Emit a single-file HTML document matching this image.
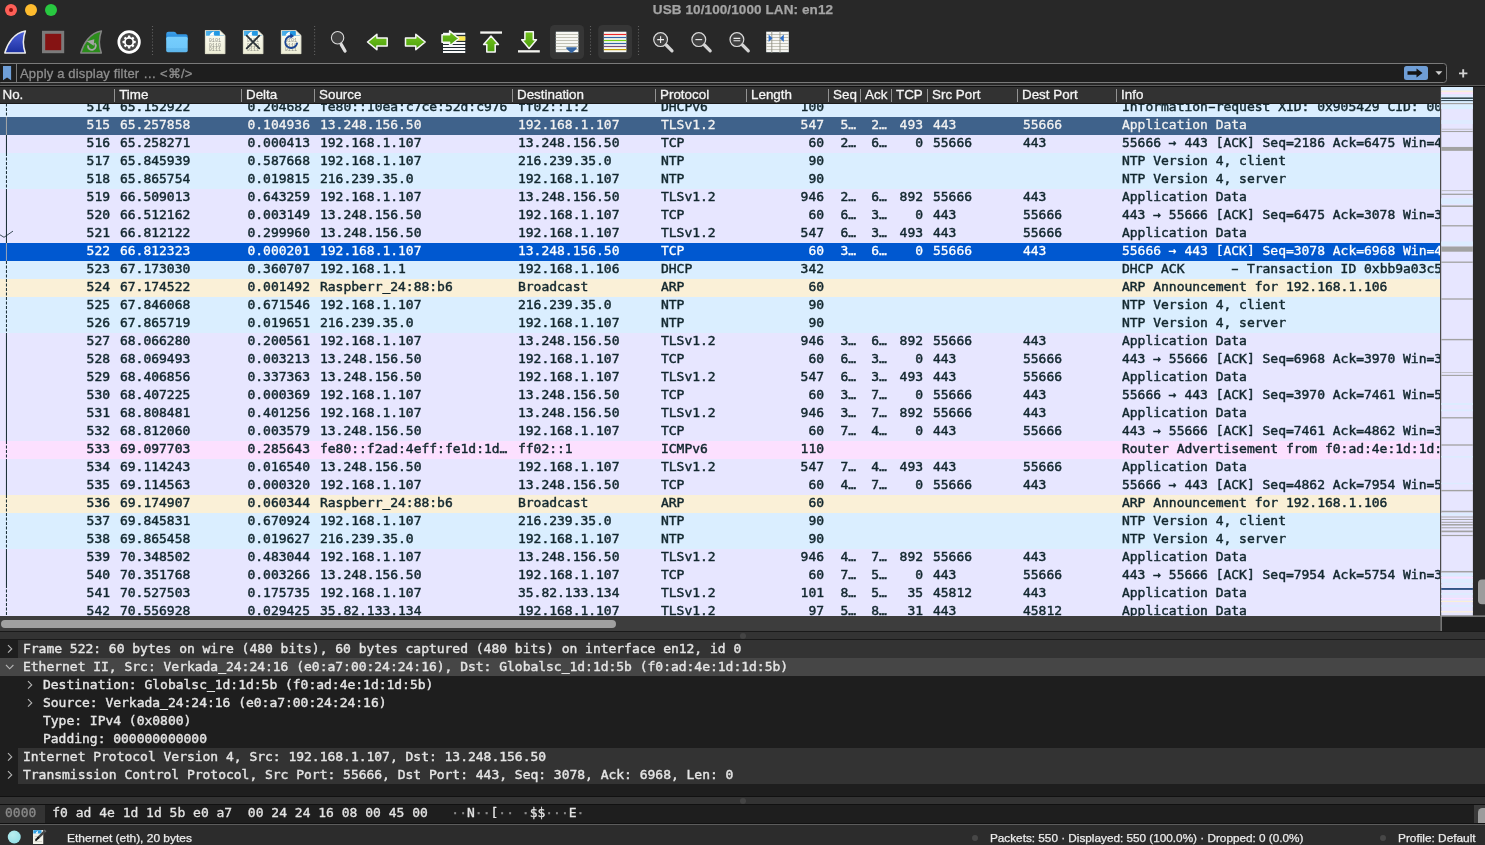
<!DOCTYPE html>
<html lang="en"><head><meta charset="utf-8"><title>USB 10/100/1000 LAN: en12</title>
<style>
html,body{margin:0;padding:0;}
body{will-change:transform;width:1485px;height:845px;overflow:hidden;background:#282828;position:relative;font-family:"Liberation Sans",sans-serif;-webkit-font-smoothing:antialiased;}
.abs{position:absolute;}
#title{left:0;top:0;width:1485px;height:20px;text-align:center;color:#a4a4a4;font-weight:bold;font-size:13.5px;letter-spacing:0.1px;line-height:19px;-webkit-text-stroke:0.25px currentColor;text-indent:1px;}
.tl{position:absolute;top:4px;width:12px;height:12px;border-radius:50%;}
#filter{left:-3px;top:63px;width:1448px;height:18px;border:1px solid #7a7a7a;border-radius:3.5px;background:#1e1e1e;box-sizing:content-box;}
#ftext{left:20px;top:63.5px;font-size:13px;line-height:19px;color:#8e8e8e;white-space:pre;-webkit-text-stroke:0.3px currentColor;letter-spacing:0.17px;}
#hdr{left:0;top:87px;width:1440px;height:16px;background:#323232;color:#f4f4f4;-webkit-text-stroke:0.3px currentColor;font-size:13.4px;line-height:15px;}
#hdr span{position:absolute;top:0;white-space:pre;}
#hdr i{position:absolute;top:2px;width:1.2px;height:13px;background:#929292;}
#list{left:0;top:104px;width:1440px;height:512px;overflow:hidden;background:#e7e6ff;font-family:"DejaVu Sans Mono","Liberation Mono",monospace;font-size:13px;}
.r{position:absolute;left:0;width:1440px;height:18px;color:#12272e;-webkit-text-stroke:0.45px currentColor;letter-spacing:-0.02px;}
.r span{position:absolute;top:0;height:18px;line-height:16px;white-space:pre;overflow:hidden;}
.r i{display:inline-block;font-style:normal;transform:scaleX(1.7);}
.udp{background:#daeeff}.tcp{background:#e7e6ff}.arp{background:#faf0d7}.icmp6{background:#fce0ff}
.sel{background:#0058d0;color:#fff;-webkit-text-stroke-width:0.3px}.sel2{background:#3f628b;color:#f2f2f2;-webkit-text-stroke-width:0.3px}
#det{left:0;top:640px;width:1485px;height:156px;background:#1e1e1e;font-family:"DejaVu Sans Mono","Liberation Mono",monospace;font-size:13px;color:#e4e4e4;overflow:hidden;}
.d{position:absolute;left:0;width:1485px;height:18px;line-height:18px;white-space:pre;-webkit-text-stroke:0.4px currentColor;letter-spacing:-0.02px;}
.d b{position:absolute;top:0;height:18px;font-weight:normal;}
.top b.bg{left:18px;width:1467px;background:#333333;}
.dsel{background:#464646;}
#bytes{left:0;top:805px;width:1485px;height:19px;background:#1e1e1e;font-family:"DejaVu Sans Mono","Liberation Mono",monospace;font-size:13px;color:#e4e4e4;line-height:15px;white-space:pre;-webkit-text-stroke:0.3px currentColor;}
#bytes u{text-decoration:none;color:#8c8c8c;}
#status{left:0;top:825px;width:1485px;height:20px;background:#2c2c2c;color:#ececec;font-size:11px;line-height:26.7px;white-space:pre;-webkit-text-stroke:0.25px currentColor;}
#status span{transform-origin:0 50%;}
</style></head><body>

<div id="title" class="abs">USB 10/100/1000 LAN: en12</div>
<div class="tl" style="left:5px;background:#fe5f57"></div><div class="abs" style="left:9.1px;top:8.1px;width:3.8px;height:3.8px;border-radius:50%;background:#8a0f0a"></div>
<div class="tl" style="left:25px;background:#febc2e"></div><div class="tl" style="left:45px;background:#28c840"></div>
<svg class="abs" style="left:0;top:20px" width="1485" height="43" viewBox="0 20 1485 43">
<defs>
<linearGradient id="gb" x1="0" y1="0" x2="0" y2="1"><stop offset="0" stop-color="#4f63dc"/><stop offset="1" stop-color="#1b2f9e"/></linearGradient>
<linearGradient id="gg" x1="0" y1="0" x2="0" y2="1"><stop offset="0" stop-color="#74c31e"/><stop offset="1" stop-color="#4a9e0c"/></linearGradient>
<linearGradient id="gf" x1="0" y1="0" x2="0" y2="1"><stop offset="0" stop-color="#76cdfc"/><stop offset="0.72" stop-color="#70c8fa"/><stop offset="0.75" stop-color="#62bbf0"/><stop offset="1" stop-color="#5eb6ec"/></linearGradient>
<linearGradient id="gt" x1="0" y1="0" x2="0" y2="1"><stop offset="0" stop-color="#3fa0e8"/><stop offset="1" stop-color="#1c84d8"/></linearGradient>
<linearGradient id="gp" x1="0" y1="0" x2="1" y2="0"><stop offset="0" stop-color="#54b4ea"/><stop offset="0.5" stop-color="#249ae4"/><stop offset="1" stop-color="#1890e0"/></linearGradient>
<linearGradient id="gpage" x1="0" y1="0" x2="0" y2="1"><stop offset="0" stop-color="#fdfdf4"/><stop offset="1" stop-color="#eeeed6"/></linearGradient>
<g id="fin"><path d="M4.8 53C7.2 44 14 32.5 25.4 30.9C22.7 38 22.9 46 25.3 53z"/></g>
<g id="page">
<path d="M0 0h14.8l5.4 5.2v18.6H0z" fill="url(#gpage)"/>
<path d="M0.9 0.8h13.6l4.8 4.7H0.9z" fill="url(#gp)"/>
<path d="M4.4 5.6C5.2 3.3 6.8 1.7 9.4 1.2C8.5 2.6 8.5 4.2 9.6 5.6z" fill="#fff"/>
<path d="M14.8 0v5.2h5.4z" fill="#f4f4e6"/>
<path d="M0.3 0.3h14.4l5.2 5v18.2H0.3z" fill="none" stroke="#cfcfbd" stroke-width="0.7"/>
</g>
<g id="digits" font-family="'Liberation Mono',monospace" font-size="5.2" fill="#77776f" opacity="0.8"><text x="3.7" y="12">0101</text><text x="3.7" y="16.5">0110</text><text x="3.7" y="21">0111</text></g>
<g id="lens"><circle cx="0" cy="0" r="6.9" fill="#404040" stroke="#dadada" stroke-width="1.2"/><path d="M5.6 5.4L11.4 11.2" stroke="#d4d4d4" stroke-width="3.2" stroke-linecap="round"/></g>
<g id="arr"><path d="M0 0L9.4 -7.7V-4H19.7V4H9.4V7.7z"/></g>
<g id="lines"><rect x="-0.3" y="-0.3" width="23.2" height="21.1" fill="#27323a"/><rect x="0" y="0" width="22.6" height="20.5" fill="#f7f7f3"/></g>
</defs>
<!-- 1 shark fin start -->
<use href="#fin" fill="url(#gb)" stroke="#ececec" stroke-width="1.5" stroke-linejoin="round"/>
<!-- 2 stop -->
<rect x="42" y="30.8" width="22.2" height="22.4" fill="#7b7b7b"/><rect x="45.2" y="33.8" width="16" height="16.4" fill="#851313"/>
<!-- 3 restart -->
<use href="#fin" x="76" fill="#2b8c1b" stroke="#858585" stroke-width="1.5" stroke-linejoin="round"/>
<path d="M88 45.4A3.9 3.9 0 1 0 94.6 43.2" fill="none" stroke="#a6a6a6" stroke-width="1.8"/><path d="M86.8 41.3l7.5-2-0.6 6.4z" fill="#a6a6a6"/>
<!-- 4 options gear -->
<circle cx="129.1" cy="42" r="10.3" fill="#484848" stroke="#fff" stroke-width="2.7"/>
<g fill="#fff"><circle cx="129.1" cy="42" r="5"/>
<rect x="127.9" y="35.5" width="2.4" height="13" rx="0.5"/><rect x="127.9" y="35.5" width="2.4" height="13" rx="0.5" transform="rotate(45 129.1 42)"/><rect x="127.9" y="35.5" width="2.4" height="13" rx="0.5" transform="rotate(90 129.1 42)"/><rect x="127.9" y="35.5" width="2.4" height="13" rx="0.5" transform="rotate(135 129.1 42)"/></g>
<circle cx="129.1" cy="42" r="3.3" fill="#363636"/>
<!-- separators -->
<g stroke="#606060" stroke-width="1.1" stroke-dasharray="1.1 2"><path d="M152.5 26v31M314.6 26v31M590.5 26v31M638.5 26v31"/></g>
<!-- 5 folder -->
<path d="M166.2 34q0-2.3 2.3-2.3h5.4q1.1 0 1.8 0.9l1.3 1.6h8.7q2 0 2 2v4h-21.5z" fill="url(#gt)"/>
<rect x="166.2" y="36.8" width="21.5" height="15.4" rx="1.6" fill="url(#gf)"/>
<!-- 6 file open -->
<use href="#page" x="205" y="30.2"/><use href="#digits" x="205" y="30.2"/>
<!-- 7 close -->
<use href="#page" x="243" y="30.2"/><use href="#digits" x="243" y="30.2"/>
<path d="M246.7 35.7l12.6 12.6M259.3 35.7l-12.6 12.6" stroke="#2a3238" stroke-width="1.8" stroke-linecap="round"/>
<!-- 8 reload -->
<use href="#page" x="281" y="30.2"/><use href="#digits" x="281" y="30.2"/>
<path d="M297.2 42.6a6 6 0 1 1 -6.2 -6.6" fill="none" stroke="#1a4595" stroke-width="1.8"/><path d="M290.3 33.3l3.8 2.7-3.8 2.7z" fill="#1a4595"/>
<!-- 9 find -->
<circle cx="337.6" cy="37.75" r="6.2" fill="#404040" stroke="#dcdcdc" stroke-width="1.1"/><path d="M341.3 44.6L345 51" stroke="#dedede" stroke-width="3.3" stroke-linecap="round"/>
<!-- 10 back / 11 fwd -->
<use href="#arr" x="367.5" y="42" fill="url(#gg)" stroke="#f6f6f6" stroke-width="1.5" stroke-linejoin="round"/>
<use href="#arr" transform="translate(425.2 42) scale(-1 1)" fill="url(#gg)" stroke="#f6f6f6" stroke-width="1.5" stroke-linejoin="round"/>
<!-- 12 goto -->
<rect x="442.7" y="32.5" width="22.8" height="20.8" fill="#222d33"/>
<g fill="#f8f8f8"><rect x="443" y="32.8" width="22.25" height="2"/><rect x="443" y="36.4" width="22.25" height="4.2"/><rect x="443" y="42" width="22.25" height="2"/><rect x="443" y="45" width="22.25" height="2"/><rect x="443" y="48" width="22.25" height="2"/><rect x="443" y="51" width="22.25" height="2"/></g>
<rect x="457" y="36.4" width="8.25" height="4.2" fill="#fce94f"/>
<path d="M0 0L9.2 -7.6V-3.8H16.8V3.8H9.2V7.6z" transform="translate(458.8 38.5) scale(-1 1)" fill="url(#gg)" stroke="#f6f6f6" stroke-width="1.5" stroke-linejoin="round"/>
<!-- 13 first -->
<rect x="480.25" y="31.4" width="21.75" height="2.3" fill="#f4f4f0"/>
<path d="M491 36l7.4 8.6h-3.2v7.4h-8.4v-7.4h-3.2z" fill="url(#gg)" stroke="#f6f6f6" stroke-width="1.5" stroke-linejoin="round"/>
<!-- 14 last -->
<rect x="518" y="50.2" width="21.8" height="2.3" fill="#f4f4f0"/>
<path d="M529.1 48.5l7.4-8.8h-3.2v-7.9h-8.4v7.9h-3.2z" fill="url(#gg)" stroke="#f6f6f6" stroke-width="1.5" stroke-linejoin="round"/>
<!-- 15 autoscroll -->
<rect x="550" y="25" width="34" height="34" rx="4.5" fill="#363636"/>
<use href="#lines" x="555.8" y="31.7"/>
<g stroke="#babaae" stroke-width="0.9"><path d="M555.8 34.5h22.6M555.8 37.5h22.6M555.8 40.5h22.6M555.8 43.5h22.6M555.8 46.5h22.6M555.8 49.6h22.6"/></g>
<path d="M566.6 47.3h9.8q1 0.6 0 1.6l-4 3.7q-0.9 0.7-1.8 0l-4-3.7q-1-1 0-1.6z" fill="#3465a4"/>
<!-- 16 colorize -->
<rect x="598.2" y="25" width="33.8" height="34" rx="4.5" fill="#363636"/>
<use href="#lines" x="603.8" y="31.7"/>
<g stroke-width="1.2"><path d="M603.8 34.5h22.6" stroke="#ef2929"/><path d="M603.8 37.5h22.6" stroke="#3465a4"/><path d="M603.8 40.5h22.6" stroke="#73d216"/><path d="M603.8 43.5h22.6" stroke="#3465a4"/><path d="M603.8 46.5h22.6" stroke="#75507b"/><path d="M603.8 49.6h22.6" stroke="#c4a000"/></g>
<!-- 17-19 zoom -->
<use href="#lens" x="660.6" y="39.6"/><path d="M657.2 39.6h6.8M660.6 36.2v6.8" stroke="#ececec" stroke-width="1.1"/>
<use href="#lens" x="698.8" y="39.6"/><path d="M695.4 39.6h6.8" stroke="#ececec" stroke-width="1.1"/>
<use href="#lens" x="736.9" y="39.6"/><path d="M733.5 38.4h6.8M733.5 40.8h6.8" stroke="#ececec" stroke-width="1.1"/>
<!-- 20 resize columns -->
<use href="#lines" x="766.2" y="31.7"/>
<g stroke="#babaae" stroke-width="0.9"><path d="M766.2 34.5h22.6M766.2 37.5h22.6M766.2 40.5h22.6M766.2 43.5h22.6M766.2 46.5h22.6M766.2 49.6h22.6"/></g>
<path d="M771.8 31v22M780 31v22" stroke="#8e8e84" stroke-width="0.9"/>
<path d="M768.6 34.4l3.9 3.75-3.9 3.75z" fill="#2f6fc8"/><path d="M783.8 34.4l-3.9 3.75 3.9 3.75z" fill="#2f6fc8"/>
</svg>

<div id="filter" class="abs"></div><div class="abs" style="left:16px;top:64px;width:1.2px;height:18px;background:#7a7a7a"></div>
<svg class="abs" style="left:0;top:63px" width="20" height="21" viewBox="0 63 20 21"><path d="M3 66h8.1v14.2l-4.05-2.8-4.05 2.8z" fill="#6f9fd8"/></svg>
<div id="ftext" class="abs">Apply a display filter … &lt;⌘/&gt;</div>
<div class="abs" style="left:1403.6px;top:66px;width:24.2px;height:14px;border-radius:2.5px;background:#6f9ed6"></div>
<svg class="abs" style="left:1400px;top:63px" width="85" height="21" viewBox="1400 63 85 21"><path d="M1407.5 71.2h9v-2.6l6 4.4-6 4.4v-2.6h-9z" fill="#141414"/><path d="M1435.4 71.2h7l-3.5 3.8z" fill="#d0d0d0"/><path d="M1463.2 69.2v8.4M1459 73.4h8.4" stroke="#d2d2d2" stroke-width="1.9"/></svg>
<div class="abs" style="left:0;top:84.75px;width:1485px;height:1.5px;background:#5e5e5e"></div>
<div class="abs" style="left:0;top:86.25px;width:1485px;height:0.75px;background:#111"></div>
<div id="hdr" class="abs">
<span style="left:2.5px">No.</span>
<i style="left:114.2px"></i>
<span style="left:119.2px">Time</span>
<i style="left:241.2px"></i>
<span style="left:246.0px">Delta</span>
<i style="left:313.8px"></i>
<span style="left:319.0px">Source</span>
<i style="left:511.8px"></i>
<span style="left:517.0px">Destination</span>
<i style="left:654.8px"></i>
<span style="left:660.0px">Protocol</span>
<i style="left:746.3px"></i>
<span style="left:751.0px">Length</span>
<i style="left:827.8px"></i>
<span style="left:833.0px">Seq</span>
<i style="left:859.8px"></i>
<span style="left:865.0px">Ack</span>
<i style="left:890.8px"></i>
<span style="left:896.0px">TCP</span>
<i style="left:926.8px"></i>
<span style="left:932.0px">Src Port</span>
<i style="left:1016.8px"></i>
<span style="left:1022.0px">Dest Port</span>
<i style="left:1115.8px"></i>
<span style="left:1121.0px">Info</span>
</div>
<div class="abs" style="left:0;top:103px;width:1440px;height:1px;background:#1c1c1c"></div>
<div id="list" class="abs">
<div class="r udp" style="top:-5px">
<span style="left:0px;width:110px;text-align:right">514</span>
<span style="left:120.0px;width:121.0px">65.152922</span>
<span style="left:247.5px;width:66.5px">0.204682</span>
<span style="left:320.0px;width:192.0px">fe80::10ea:c7ce:52d:c976</span>
<span style="left:518.0px;width:137.0px">ff02::1:2</span>
<span style="left:661.0px;width:86.0px">DHCPv6</span>
<span style="left:747px;width:77px;text-align:right">100</span>
<span style="left:1122.0px;width:318.0px">Information<i>-</i>request XID: 0x905429 CID: 000100012c1e</span>
</div>
<div class="r sel2" style="top:13px">
<span style="left:0px;width:110px;text-align:right">515</span>
<span style="left:120.0px;width:121.0px">65.257858</span>
<span style="left:247.5px;width:66.5px">0.104936</span>
<span style="left:320.0px;width:192.0px">13.248.156.50</span>
<span style="left:518.0px;width:137.0px">192.168.1.107</span>
<span style="left:661.0px;width:86.0px">TLSv1.2</span>
<span style="left:747px;width:77px;text-align:right">547</span>
<span style="left:840.4px;width:19.6px">5…</span>
<span style="left:871.3px;width:19.7px">2…</span>
<span style="left:891px;width:32px;text-align:right">493</span>
<span style="left:933.0px;width:84.0px">443</span>
<span style="left:1023.0px;width:93.0px">55666</span>
<span style="left:1122.0px;width:318.0px">Application Data</span>
</div>
<div class="r tcp" style="top:31px">
<span style="left:0px;width:110px;text-align:right">516</span>
<span style="left:120.0px;width:121.0px">65.258271</span>
<span style="left:247.5px;width:66.5px">0.000413</span>
<span style="left:320.0px;width:192.0px">192.168.1.107</span>
<span style="left:518.0px;width:137.0px">13.248.156.50</span>
<span style="left:661.0px;width:86.0px">TCP</span>
<span style="left:747px;width:77px;text-align:right">60</span>
<span style="left:840.4px;width:19.6px">2…</span>
<span style="left:871.3px;width:19.7px">6…</span>
<span style="left:891px;width:32px;text-align:right">0</span>
<span style="left:933.0px;width:84.0px">55666</span>
<span style="left:1023.0px;width:93.0px">443</span>
<span style="left:1122.0px;width:318.0px">55666 → 443 [ACK] Seq=2186 Ack=6475 Win=4096 Len=0</span>
</div>
<div class="r udp" style="top:49px">
<span style="left:0px;width:110px;text-align:right">517</span>
<span style="left:120.0px;width:121.0px">65.845939</span>
<span style="left:247.5px;width:66.5px">0.587668</span>
<span style="left:320.0px;width:192.0px">192.168.1.107</span>
<span style="left:518.0px;width:137.0px">216.239.35.0</span>
<span style="left:661.0px;width:86.0px">NTP</span>
<span style="left:747px;width:77px;text-align:right">90</span>
<span style="left:1122.0px;width:318.0px">NTP Version 4, client</span>
</div>
<div class="r udp" style="top:67px">
<span style="left:0px;width:110px;text-align:right">518</span>
<span style="left:120.0px;width:121.0px">65.865754</span>
<span style="left:247.5px;width:66.5px">0.019815</span>
<span style="left:320.0px;width:192.0px">216.239.35.0</span>
<span style="left:518.0px;width:137.0px">192.168.1.107</span>
<span style="left:661.0px;width:86.0px">NTP</span>
<span style="left:747px;width:77px;text-align:right">90</span>
<span style="left:1122.0px;width:318.0px">NTP Version 4, server</span>
</div>
<div class="r tcp" style="top:85px">
<span style="left:0px;width:110px;text-align:right">519</span>
<span style="left:120.0px;width:121.0px">66.509013</span>
<span style="left:247.5px;width:66.5px">0.643259</span>
<span style="left:320.0px;width:192.0px">192.168.1.107</span>
<span style="left:518.0px;width:137.0px">13.248.156.50</span>
<span style="left:661.0px;width:86.0px">TLSv1.2</span>
<span style="left:747px;width:77px;text-align:right">946</span>
<span style="left:840.4px;width:19.6px">2…</span>
<span style="left:871.3px;width:19.7px">6…</span>
<span style="left:891px;width:32px;text-align:right">892</span>
<span style="left:933.0px;width:84.0px">55666</span>
<span style="left:1023.0px;width:93.0px">443</span>
<span style="left:1122.0px;width:318.0px">Application Data</span>
</div>
<div class="r tcp" style="top:103px">
<span style="left:0px;width:110px;text-align:right">520</span>
<span style="left:120.0px;width:121.0px">66.512162</span>
<span style="left:247.5px;width:66.5px">0.003149</span>
<span style="left:320.0px;width:192.0px">13.248.156.50</span>
<span style="left:518.0px;width:137.0px">192.168.1.107</span>
<span style="left:661.0px;width:86.0px">TCP</span>
<span style="left:747px;width:77px;text-align:right">60</span>
<span style="left:840.4px;width:19.6px">6…</span>
<span style="left:871.3px;width:19.7px">3…</span>
<span style="left:891px;width:32px;text-align:right">0</span>
<span style="left:933.0px;width:84.0px">443</span>
<span style="left:1023.0px;width:93.0px">55666</span>
<span style="left:1122.0px;width:318.0px">443 → 55666 [ACK] Seq=6475 Ack=3078 Win=365 Len=0</span>
</div>
<div class="r tcp" style="top:121px">
<span style="left:0px;width:110px;text-align:right">521</span>
<span style="left:120.0px;width:121.0px">66.812122</span>
<span style="left:247.5px;width:66.5px">0.299960</span>
<span style="left:320.0px;width:192.0px">13.248.156.50</span>
<span style="left:518.0px;width:137.0px">192.168.1.107</span>
<span style="left:661.0px;width:86.0px">TLSv1.2</span>
<span style="left:747px;width:77px;text-align:right">547</span>
<span style="left:840.4px;width:19.6px">6…</span>
<span style="left:871.3px;width:19.7px">3…</span>
<span style="left:891px;width:32px;text-align:right">493</span>
<span style="left:933.0px;width:84.0px">443</span>
<span style="left:1023.0px;width:93.0px">55666</span>
<span style="left:1122.0px;width:318.0px">Application Data</span>
</div>
<div class="r sel" style="top:139px">
<span style="left:0px;width:110px;text-align:right">522</span>
<span style="left:120.0px;width:121.0px">66.812323</span>
<span style="left:247.5px;width:66.5px">0.000201</span>
<span style="left:320.0px;width:192.0px">192.168.1.107</span>
<span style="left:518.0px;width:137.0px">13.248.156.50</span>
<span style="left:661.0px;width:86.0px">TCP</span>
<span style="left:747px;width:77px;text-align:right">60</span>
<span style="left:840.4px;width:19.6px">3…</span>
<span style="left:871.3px;width:19.7px">6…</span>
<span style="left:891px;width:32px;text-align:right">0</span>
<span style="left:933.0px;width:84.0px">55666</span>
<span style="left:1023.0px;width:93.0px">443</span>
<span style="left:1122.0px;width:318.0px">55666 → 443 [ACK] Seq=3078 Ack=6968 Win=4096 Len=0</span>
</div>
<div class="r udp" style="top:157px">
<span style="left:0px;width:110px;text-align:right">523</span>
<span style="left:120.0px;width:121.0px">67.173030</span>
<span style="left:247.5px;width:66.5px">0.360707</span>
<span style="left:320.0px;width:192.0px">192.168.1.1</span>
<span style="left:518.0px;width:137.0px">192.168.1.106</span>
<span style="left:661.0px;width:86.0px">DHCP</span>
<span style="left:747px;width:77px;text-align:right">342</span>
<span style="left:1122.0px;width:318.0px">DHCP ACK      <i>-</i> Transaction ID 0xbb9a03c5</span>
</div>
<div class="r arp" style="top:175px">
<span style="left:0px;width:110px;text-align:right">524</span>
<span style="left:120.0px;width:121.0px">67.174522</span>
<span style="left:247.5px;width:66.5px">0.001492</span>
<span style="left:320.0px;width:192.0px">Raspberr_24:88:b6</span>
<span style="left:518.0px;width:137.0px">Broadcast</span>
<span style="left:661.0px;width:86.0px">ARP</span>
<span style="left:747px;width:77px;text-align:right">60</span>
<span style="left:1122.0px;width:318.0px">ARP Announcement for 192.168.1.106</span>
</div>
<div class="r udp" style="top:193px">
<span style="left:0px;width:110px;text-align:right">525</span>
<span style="left:120.0px;width:121.0px">67.846068</span>
<span style="left:247.5px;width:66.5px">0.671546</span>
<span style="left:320.0px;width:192.0px">192.168.1.107</span>
<span style="left:518.0px;width:137.0px">216.239.35.0</span>
<span style="left:661.0px;width:86.0px">NTP</span>
<span style="left:747px;width:77px;text-align:right">90</span>
<span style="left:1122.0px;width:318.0px">NTP Version 4, client</span>
</div>
<div class="r udp" style="top:211px">
<span style="left:0px;width:110px;text-align:right">526</span>
<span style="left:120.0px;width:121.0px">67.865719</span>
<span style="left:247.5px;width:66.5px">0.019651</span>
<span style="left:320.0px;width:192.0px">216.239.35.0</span>
<span style="left:518.0px;width:137.0px">192.168.1.107</span>
<span style="left:661.0px;width:86.0px">NTP</span>
<span style="left:747px;width:77px;text-align:right">90</span>
<span style="left:1122.0px;width:318.0px">NTP Version 4, server</span>
</div>
<div class="r tcp" style="top:229px">
<span style="left:0px;width:110px;text-align:right">527</span>
<span style="left:120.0px;width:121.0px">68.066280</span>
<span style="left:247.5px;width:66.5px">0.200561</span>
<span style="left:320.0px;width:192.0px">192.168.1.107</span>
<span style="left:518.0px;width:137.0px">13.248.156.50</span>
<span style="left:661.0px;width:86.0px">TLSv1.2</span>
<span style="left:747px;width:77px;text-align:right">946</span>
<span style="left:840.4px;width:19.6px">3…</span>
<span style="left:871.3px;width:19.7px">6…</span>
<span style="left:891px;width:32px;text-align:right">892</span>
<span style="left:933.0px;width:84.0px">55666</span>
<span style="left:1023.0px;width:93.0px">443</span>
<span style="left:1122.0px;width:318.0px">Application Data</span>
</div>
<div class="r tcp" style="top:247px">
<span style="left:0px;width:110px;text-align:right">528</span>
<span style="left:120.0px;width:121.0px">68.069493</span>
<span style="left:247.5px;width:66.5px">0.003213</span>
<span style="left:320.0px;width:192.0px">13.248.156.50</span>
<span style="left:518.0px;width:137.0px">192.168.1.107</span>
<span style="left:661.0px;width:86.0px">TCP</span>
<span style="left:747px;width:77px;text-align:right">60</span>
<span style="left:840.4px;width:19.6px">6…</span>
<span style="left:871.3px;width:19.7px">3…</span>
<span style="left:891px;width:32px;text-align:right">0</span>
<span style="left:933.0px;width:84.0px">443</span>
<span style="left:1023.0px;width:93.0px">55666</span>
<span style="left:1122.0px;width:318.0px">443 → 55666 [ACK] Seq=6968 Ack=3970 Win=365 Len=0</span>
</div>
<div class="r tcp" style="top:265px">
<span style="left:0px;width:110px;text-align:right">529</span>
<span style="left:120.0px;width:121.0px">68.406856</span>
<span style="left:247.5px;width:66.5px">0.337363</span>
<span style="left:320.0px;width:192.0px">13.248.156.50</span>
<span style="left:518.0px;width:137.0px">192.168.1.107</span>
<span style="left:661.0px;width:86.0px">TLSv1.2</span>
<span style="left:747px;width:77px;text-align:right">547</span>
<span style="left:840.4px;width:19.6px">6…</span>
<span style="left:871.3px;width:19.7px">3…</span>
<span style="left:891px;width:32px;text-align:right">493</span>
<span style="left:933.0px;width:84.0px">443</span>
<span style="left:1023.0px;width:93.0px">55666</span>
<span style="left:1122.0px;width:318.0px">Application Data</span>
</div>
<div class="r tcp" style="top:283px">
<span style="left:0px;width:110px;text-align:right">530</span>
<span style="left:120.0px;width:121.0px">68.407225</span>
<span style="left:247.5px;width:66.5px">0.000369</span>
<span style="left:320.0px;width:192.0px">192.168.1.107</span>
<span style="left:518.0px;width:137.0px">13.248.156.50</span>
<span style="left:661.0px;width:86.0px">TCP</span>
<span style="left:747px;width:77px;text-align:right">60</span>
<span style="left:840.4px;width:19.6px">3…</span>
<span style="left:871.3px;width:19.7px">7…</span>
<span style="left:891px;width:32px;text-align:right">0</span>
<span style="left:933.0px;width:84.0px">55666</span>
<span style="left:1023.0px;width:93.0px">443</span>
<span style="left:1122.0px;width:318.0px">55666 → 443 [ACK] Seq=3970 Ack=7461 Win=5120 Len=0</span>
</div>
<div class="r tcp" style="top:301px">
<span style="left:0px;width:110px;text-align:right">531</span>
<span style="left:120.0px;width:121.0px">68.808481</span>
<span style="left:247.5px;width:66.5px">0.401256</span>
<span style="left:320.0px;width:192.0px">192.168.1.107</span>
<span style="left:518.0px;width:137.0px">13.248.156.50</span>
<span style="left:661.0px;width:86.0px">TLSv1.2</span>
<span style="left:747px;width:77px;text-align:right">946</span>
<span style="left:840.4px;width:19.6px">3…</span>
<span style="left:871.3px;width:19.7px">7…</span>
<span style="left:891px;width:32px;text-align:right">892</span>
<span style="left:933.0px;width:84.0px">55666</span>
<span style="left:1023.0px;width:93.0px">443</span>
<span style="left:1122.0px;width:318.0px">Application Data</span>
</div>
<div class="r tcp" style="top:319px">
<span style="left:0px;width:110px;text-align:right">532</span>
<span style="left:120.0px;width:121.0px">68.812060</span>
<span style="left:247.5px;width:66.5px">0.003579</span>
<span style="left:320.0px;width:192.0px">13.248.156.50</span>
<span style="left:518.0px;width:137.0px">192.168.1.107</span>
<span style="left:661.0px;width:86.0px">TCP</span>
<span style="left:747px;width:77px;text-align:right">60</span>
<span style="left:840.4px;width:19.6px">7…</span>
<span style="left:871.3px;width:19.7px">4…</span>
<span style="left:891px;width:32px;text-align:right">0</span>
<span style="left:933.0px;width:84.0px">443</span>
<span style="left:1023.0px;width:93.0px">55666</span>
<span style="left:1122.0px;width:318.0px">443 → 55666 [ACK] Seq=7461 Ack=4862 Win=365 Len=0</span>
</div>
<div class="r icmp6" style="top:337px">
<span style="left:0px;width:110px;text-align:right">533</span>
<span style="left:120.0px;width:121.0px">69.097703</span>
<span style="left:247.5px;width:66.5px">0.285643</span>
<span style="left:320.0px;width:192.0px">fe80::f2ad:4eff:fe1d:1d…</span>
<span style="left:518.0px;width:137.0px">ff02::1</span>
<span style="left:661.0px;width:86.0px">ICMPv6</span>
<span style="left:747px;width:77px;text-align:right">110</span>
<span style="left:1122.0px;width:318.0px">Router Advertisement from f0:ad:4e:1d:1d:5b</span>
</div>
<div class="r tcp" style="top:355px">
<span style="left:0px;width:110px;text-align:right">534</span>
<span style="left:120.0px;width:121.0px">69.114243</span>
<span style="left:247.5px;width:66.5px">0.016540</span>
<span style="left:320.0px;width:192.0px">13.248.156.50</span>
<span style="left:518.0px;width:137.0px">192.168.1.107</span>
<span style="left:661.0px;width:86.0px">TLSv1.2</span>
<span style="left:747px;width:77px;text-align:right">547</span>
<span style="left:840.4px;width:19.6px">7…</span>
<span style="left:871.3px;width:19.7px">4…</span>
<span style="left:891px;width:32px;text-align:right">493</span>
<span style="left:933.0px;width:84.0px">443</span>
<span style="left:1023.0px;width:93.0px">55666</span>
<span style="left:1122.0px;width:318.0px">Application Data</span>
</div>
<div class="r tcp" style="top:373px">
<span style="left:0px;width:110px;text-align:right">535</span>
<span style="left:120.0px;width:121.0px">69.114563</span>
<span style="left:247.5px;width:66.5px">0.000320</span>
<span style="left:320.0px;width:192.0px">192.168.1.107</span>
<span style="left:518.0px;width:137.0px">13.248.156.50</span>
<span style="left:661.0px;width:86.0px">TCP</span>
<span style="left:747px;width:77px;text-align:right">60</span>
<span style="left:840.4px;width:19.6px">4…</span>
<span style="left:871.3px;width:19.7px">7…</span>
<span style="left:891px;width:32px;text-align:right">0</span>
<span style="left:933.0px;width:84.0px">55666</span>
<span style="left:1023.0px;width:93.0px">443</span>
<span style="left:1122.0px;width:318.0px">55666 → 443 [ACK] Seq=4862 Ack=7954 Win=5120 Len=0</span>
</div>
<div class="r arp" style="top:391px">
<span style="left:0px;width:110px;text-align:right">536</span>
<span style="left:120.0px;width:121.0px">69.174907</span>
<span style="left:247.5px;width:66.5px">0.060344</span>
<span style="left:320.0px;width:192.0px">Raspberr_24:88:b6</span>
<span style="left:518.0px;width:137.0px">Broadcast</span>
<span style="left:661.0px;width:86.0px">ARP</span>
<span style="left:747px;width:77px;text-align:right">60</span>
<span style="left:1122.0px;width:318.0px">ARP Announcement for 192.168.1.106</span>
</div>
<div class="r udp" style="top:409px">
<span style="left:0px;width:110px;text-align:right">537</span>
<span style="left:120.0px;width:121.0px">69.845831</span>
<span style="left:247.5px;width:66.5px">0.670924</span>
<span style="left:320.0px;width:192.0px">192.168.1.107</span>
<span style="left:518.0px;width:137.0px">216.239.35.0</span>
<span style="left:661.0px;width:86.0px">NTP</span>
<span style="left:747px;width:77px;text-align:right">90</span>
<span style="left:1122.0px;width:318.0px">NTP Version 4, client</span>
</div>
<div class="r udp" style="top:427px">
<span style="left:0px;width:110px;text-align:right">538</span>
<span style="left:120.0px;width:121.0px">69.865458</span>
<span style="left:247.5px;width:66.5px">0.019627</span>
<span style="left:320.0px;width:192.0px">216.239.35.0</span>
<span style="left:518.0px;width:137.0px">192.168.1.107</span>
<span style="left:661.0px;width:86.0px">NTP</span>
<span style="left:747px;width:77px;text-align:right">90</span>
<span style="left:1122.0px;width:318.0px">NTP Version 4, server</span>
</div>
<div class="r tcp" style="top:445px">
<span style="left:0px;width:110px;text-align:right">539</span>
<span style="left:120.0px;width:121.0px">70.348502</span>
<span style="left:247.5px;width:66.5px">0.483044</span>
<span style="left:320.0px;width:192.0px">192.168.1.107</span>
<span style="left:518.0px;width:137.0px">13.248.156.50</span>
<span style="left:661.0px;width:86.0px">TLSv1.2</span>
<span style="left:747px;width:77px;text-align:right">946</span>
<span style="left:840.4px;width:19.6px">4…</span>
<span style="left:871.3px;width:19.7px">7…</span>
<span style="left:891px;width:32px;text-align:right">892</span>
<span style="left:933.0px;width:84.0px">55666</span>
<span style="left:1023.0px;width:93.0px">443</span>
<span style="left:1122.0px;width:318.0px">Application Data</span>
</div>
<div class="r tcp" style="top:463px">
<span style="left:0px;width:110px;text-align:right">540</span>
<span style="left:120.0px;width:121.0px">70.351768</span>
<span style="left:247.5px;width:66.5px">0.003266</span>
<span style="left:320.0px;width:192.0px">13.248.156.50</span>
<span style="left:518.0px;width:137.0px">192.168.1.107</span>
<span style="left:661.0px;width:86.0px">TCP</span>
<span style="left:747px;width:77px;text-align:right">60</span>
<span style="left:840.4px;width:19.6px">7…</span>
<span style="left:871.3px;width:19.7px">5…</span>
<span style="left:891px;width:32px;text-align:right">0</span>
<span style="left:933.0px;width:84.0px">443</span>
<span style="left:1023.0px;width:93.0px">55666</span>
<span style="left:1122.0px;width:318.0px">443 → 55666 [ACK] Seq=7954 Ack=5754 Win=365 Len=0</span>
</div>
<div class="r tcp" style="top:481px">
<span style="left:0px;width:110px;text-align:right">541</span>
<span style="left:120.0px;width:121.0px">70.527503</span>
<span style="left:247.5px;width:66.5px">0.175735</span>
<span style="left:320.0px;width:192.0px">192.168.1.107</span>
<span style="left:518.0px;width:137.0px">35.82.133.134</span>
<span style="left:661.0px;width:86.0px">TLSv1.2</span>
<span style="left:747px;width:77px;text-align:right">101</span>
<span style="left:840.4px;width:19.6px">8…</span>
<span style="left:871.3px;width:19.7px">5…</span>
<span style="left:891px;width:32px;text-align:right">35</span>
<span style="left:933.0px;width:84.0px">45812</span>
<span style="left:1023.0px;width:93.0px">443</span>
<span style="left:1122.0px;width:318.0px">Application Data</span>
</div>
<div class="r tcp" style="top:499px">
<span style="left:0px;width:110px;text-align:right">542</span>
<span style="left:120.0px;width:121.0px">70.556928</span>
<span style="left:247.5px;width:66.5px">0.029425</span>
<span style="left:320.0px;width:192.0px">35.82.133.134</span>
<span style="left:518.0px;width:137.0px">192.168.1.107</span>
<span style="left:661.0px;width:86.0px">TLSv1.2</span>
<span style="left:747px;width:77px;text-align:right">97</span>
<span style="left:840.4px;width:19.6px">5…</span>
<span style="left:871.3px;width:19.7px">8…</span>
<span style="left:891px;width:32px;text-align:right">31</span>
<span style="left:933.0px;width:84.0px">443</span>
<span style="left:1023.0px;width:93.0px">45812</span>
<span style="left:1122.0px;width:318.0px">Application Data</span>
</div>
<svg class="abs" style="left:0;top:0" width="20" height="512" viewBox="0 104 20 512">
<path d="M6.45 99 V117" stroke="#12272e" stroke-width="1" stroke-dasharray="3 1.5"/>
<path d="M6.45 117 V135" stroke="#a8a8a8" stroke-width="1"/>
<path d="M6.45 135 V153" stroke="#12272e" stroke-width="1"/>
<path d="M6.45 153 V171" stroke="#12272e" stroke-width="1" stroke-dasharray="3 1.5"/>
<path d="M6.45 171 V189" stroke="#12272e" stroke-width="1" stroke-dasharray="3 1.5"/>
<path d="M6.45 189 V207" stroke="#12272e" stroke-width="1"/>
<path d="M6.45 207 V225" stroke="#12272e" stroke-width="1"/>
<path d="M6.45 225 V243" stroke="#12272e" stroke-width="1"/>
<path d="M6.45 243 V261" stroke="#9aa4b8" stroke-width="1"/>
<path d="M6.45 261 V279" stroke="#12272e" stroke-width="1" stroke-dasharray="3 1.5"/>
<path d="M6.45 279 V297" stroke="#12272e" stroke-width="1" stroke-dasharray="3 1.5"/>
<path d="M6.45 297 V315" stroke="#12272e" stroke-width="1" stroke-dasharray="3 1.5"/>
<path d="M6.45 315 V333" stroke="#12272e" stroke-width="1" stroke-dasharray="3 1.5"/>
<path d="M6.45 333 V351" stroke="#12272e" stroke-width="1"/>
<path d="M6.45 351 V369" stroke="#12272e" stroke-width="1"/>
<path d="M6.45 369 V387" stroke="#12272e" stroke-width="1"/>
<path d="M6.45 387 V405" stroke="#12272e" stroke-width="1"/>
<path d="M6.45 405 V423" stroke="#12272e" stroke-width="1"/>
<path d="M6.45 423 V441" stroke="#12272e" stroke-width="1"/>
<path d="M6.45 441 V459" stroke="#12272e" stroke-width="1" stroke-dasharray="3 1.5"/>
<path d="M6.45 459 V477" stroke="#12272e" stroke-width="1"/>
<path d="M6.45 477 V495" stroke="#12272e" stroke-width="1"/>
<path d="M6.45 495 V513" stroke="#12272e" stroke-width="1" stroke-dasharray="3 1.5"/>
<path d="M6.45 513 V531" stroke="#12272e" stroke-width="1" stroke-dasharray="3 1.5"/>
<path d="M6.45 531 V549" stroke="#12272e" stroke-width="1" stroke-dasharray="3 1.5"/>
<path d="M6.45 549 V567" stroke="#12272e" stroke-width="1"/>
<path d="M6.45 567 V585" stroke="#12272e" stroke-width="1"/>
<path d="M6.45 585 V603" stroke="#12272e" stroke-width="1" stroke-dasharray="3 1.5"/>
<path d="M6.45 603 V621" stroke="#12272e" stroke-width="1" stroke-dasharray="3 1.5"/>
<path d="M0 234.8L4 237.3L13 231.1" fill="none" stroke="#12272e" stroke-width="0.8"/>
</svg>
</div>
<svg class="abs" style="left:1440px;top:87px" width="45" height="544" viewBox="1440 87 45 544">
<rect x="1440" y="87" width="45" height="544" fill="#2b2b2b"/>
<rect x="1440.3" y="87" width="1" height="529" fill="#5a5a5a"/>
<rect x="1441.2" y="87" width="31.7" height="528.6" fill="#e7e6ff"/>
<rect x="1441.2" y="87.00" width="31.7" height="3.60" fill="#daeeff"/>
<rect x="1441.2" y="90.60" width="31.7" height="1.70" fill="#faf0d7"/>
<rect x="1441.2" y="92.30" width="31.7" height="2.00" fill="#fce0ff"/>
<rect x="1441.2" y="94.30" width="31.7" height="4.10" fill="#e2ecff"/>
<rect x="1441.2" y="97.5" width="31.7" height="1.5" fill="#12272e"/>
<rect x="1441.2" y="98.8" width="31.7" height="1.4" fill="#daeeff"/>
<rect x="1441.2" y="100.2" width="31.7" height="1.5" fill="#12272e"/>
<rect x="1441.2" y="101.10" width="31.7" height="1.90" fill="#daeeff"/>
<rect x="1441.2" y="103.00" width="31.7" height="1.40" fill="#a2a2a2"/>
<rect x="1441.2" y="104.40" width="31.7" height="4.60" fill="#daeeff"/>
<rect x="1441.2" y="120.00" width="31.7" height="4.00" fill="#daeeff" opacity="0.6"/>
<rect x="1441.2" y="128.75" width="31.7" height="0.90" fill="#bdbdc4"/>
<rect x="1441.2" y="130.95" width="31.7" height="1.10" fill="#a2a2a2"/>
<rect x="1441.2" y="146.95" width="31.7" height="3.90" fill="#a2a2a2"/>
<rect x="1441.2" y="190.10" width="31.7" height="1.00" fill="#bdbdc4"/>
<rect x="1441.2" y="193.65" width="31.7" height="1.30" fill="#a2a2a2"/>
<rect x="1441.2" y="205.40" width="31.7" height="1.60" fill="#a2a2a2"/>
<rect x="1441.2" y="225.15" width="31.7" height="1.30" fill="#a2a2a2"/>
<rect x="1441.2" y="246.50" width="31.7" height="5.20" fill="#a2a2a2"/>
<rect x="1441.2" y="261.55" width="31.7" height="1.30" fill="#a2a2a2"/>
<rect x="1441.2" y="298.35" width="31.7" height="1.30" fill="#a2a2a2"/>
<rect x="1441.2" y="338.90" width="31.7" height="1.40" fill="#a2a2a2"/>
<rect x="1441.2" y="372.15" width="31.7" height="0.90" fill="#bdbdc4"/>
<rect x="1441.2" y="374.85" width="31.7" height="1.10" fill="#a2a2a2"/>
<rect x="1441.2" y="417.15" width="31.7" height="1.30" fill="#a2a2a2"/>
<rect x="1441.2" y="444.35" width="31.7" height="1.30" fill="#a2a2a2"/>
<rect x="1441.2" y="489.90" width="31.7" height="1.40" fill="#a2a2a2"/>
<rect x="1441.2" y="510.75" width="31.7" height="1.50" fill="#a2a2a2"/>
<rect x="1441.2" y="516.55" width="31.7" height="0.90" fill="#a2a2a2"/>
<rect x="1441.2" y="519.05" width="31.7" height="0.90" fill="#a2a2a2"/>
<rect x="1441.2" y="521.80" width="31.7" height="1.00" fill="#a2a2a2"/>
<rect x="1441.2" y="524.05" width="31.7" height="1.50" fill="#a2a2a2"/>
<rect x="1441.2" y="527.30" width="31.7" height="1.00" fill="#a2a2a2"/>
<rect x="1441.2" y="530.55" width="31.7" height="1.70" fill="#a2a2a2"/>
<rect x="1441.2" y="534.90" width="31.7" height="1.20" fill="#a2a2a2"/>
<rect x="1441.2" y="570.95" width="31.7" height="1.50" fill="#a2a2a2"/>
<rect x="1441.2" y="198.30" width="31.7" height="5.70" fill="#daeeff" opacity="0.8"/>
<rect x="1441.2" y="241.50" width="31.7" height="4.20" fill="#daeeff" opacity="0.8"/>
<rect x="1441.2" y="403.00" width="31.7" height="2.00" fill="#daeeff" opacity="0.8"/>
<rect x="1441.2" y="409.50" width="31.7" height="1.70" fill="#daeeff" opacity="0.8"/>
<rect x="1441.2" y="456.00" width="31.7" height="1.50" fill="#daeeff" opacity="0.8"/>
<rect x="1441.2" y="482.80" width="31.7" height="1.40" fill="#daeeff" opacity="0.8"/>
<rect x="1441.2" y="513.00" width="31.7" height="2.50" fill="#daeeff" opacity="0.8"/>
<rect x="1441.2" y="573.00" width="31.7" height="3.00" fill="#daeeff" opacity="0.8"/>
<rect x="1441.2" y="579.00" width="31.7" height="4.00" fill="#daeeff" opacity="0.8"/>
<rect x="1441.2" y="584.50" width="31.7" height="2.00" fill="#daeeff" opacity="0.8"/>
<rect x="1441.2" y="577.00" width="31.7" height="1.50" fill="#fce0ff" opacity="0.8"/>
<rect x="1441.2" y="588.00" width="31.7" height="1.90" fill="#2f5486"/>
<rect x="1441.2" y="598.00" width="31.7" height="1.20" fill="#fce0ff"/>
<rect x="1441.2" y="600.80" width="31.7" height="1.20" fill="#faf0d7"/>
<rect x="1441.2" y="611.20" width="31.7" height="1.20" fill="#faf0d7"/>
<rect x="1441.2" y="593.00" width="31.7" height="2.00" fill="#daeeff" opacity="0.7"/>
<rect x="1441.2" y="605.00" width="31.7" height="2.00" fill="#daeeff" opacity="0.6"/>
<rect x="1440.6" y="616" width="44.4" height="15" fill="#1e1e1e"/>
<rect x="1440.6" y="615.6" width="44.4" height="1" fill="#b0b0b0"/><rect x="1440.6" y="615.6" width="1" height="15.4" fill="#b0b0b0"/>
<rect x="1478" y="579.5" width="12" height="24.8" rx="4" fill="#9c9c9c"/>
</svg>
<div class="abs" style="left:0;top:616px;width:1440px;height:15px;background:#3d3d3d"></div>
<div class="abs" style="left:1px;top:620px;width:615px;height:8px;border-radius:4px;background:#a0a0a0"></div>
<div class="abs" style="left:0;top:631px;width:1485px;height:1px;background:#1a1a1a"></div>
<div class="abs" style="left:0;top:632px;width:1485px;height:7px;background:#333"></div>
<div class="abs" style="left:740px;top:633px;width:6px;height:6px;border-radius:50%;background:#444"></div>
<div class="abs" style="left:0;top:639px;width:1485px;height:1px;background:#1a1a1a"></div>
<div id="det" class="abs">
<div class="d top" style="top:0px">
<b class="bg"></b>
<svg class="abs" style="left:7.1px;top:4px" width="7" height="10" viewBox="0 0 7 10"><path d="M1 1.2l3.7 3.7L1 8.6" fill="none" stroke="#b4b4b4" stroke-width="1.15"/></svg>
<b style="left:23px">Frame 522: 60 bytes on wire (480 bits), 60 bytes captured (480 bits) on interface en12, id 0</b>
</div>
<div class="d dsel" style="top:18px">
<svg class="abs" style="left:5.1px;top:6px" width="10" height="7" viewBox="0 0 10 7"><path d="M1 1l3.7 3.8L8.4 1" fill="none" stroke="#b4b4b4" stroke-width="1.15"/></svg>
<b style="left:23px">Ethernet II, Src: Verkada_24:24:16 (e0:a7:00:24:24:16), Dst: Globalsc_1d:1d:5b (f0:ad:4e:1d:1d:5b)</b>
</div>
<div class="d " style="top:36px">
<svg class="abs" style="left:27.1px;top:4px" width="7" height="10" viewBox="0 0 7 10"><path d="M1 1.2l3.7 3.7L1 8.6" fill="none" stroke="#b4b4b4" stroke-width="1.15"/></svg>
<b style="left:43px">Destination: Globalsc_1d:1d:5b (f0:ad:4e:1d:1d:5b)</b>
</div>
<div class="d " style="top:54px">
<svg class="abs" style="left:27.1px;top:4px" width="7" height="10" viewBox="0 0 7 10"><path d="M1 1.2l3.7 3.7L1 8.6" fill="none" stroke="#b4b4b4" stroke-width="1.15"/></svg>
<b style="left:43px">Source: Verkada_24:24:16 (e0:a7:00:24:24:16)</b>
</div>
<div class="d " style="top:72px">
<b style="left:43px">Type: IPv4 (0x0800)</b>
</div>
<div class="d " style="top:90px">
<b style="left:43px">Padding: 000000000000</b>
</div>
<div class="d top" style="top:108px">
<b class="bg"></b>
<svg class="abs" style="left:7.1px;top:4px" width="7" height="10" viewBox="0 0 7 10"><path d="M1 1.2l3.7 3.7L1 8.6" fill="none" stroke="#b4b4b4" stroke-width="1.15"/></svg>
<b style="left:23px">Internet Protocol Version 4, Src: 192.168.1.107, Dst: 13.248.156.50</b>
</div>
<div class="d top" style="top:126px">
<b class="bg"></b>
<svg class="abs" style="left:7.1px;top:4px" width="7" height="10" viewBox="0 0 7 10"><path d="M1 1.2l3.7 3.7L1 8.6" fill="none" stroke="#b4b4b4" stroke-width="1.15"/></svg>
<b style="left:23px">Transmission Control Protocol, Src Port: 55666, Dst Port: 443, Seq: 3078, Ack: 6968, Len: 0</b>
</div>
</div>
<div class="abs" style="left:0;top:796px;width:1485px;height:1px;background:#111"></div>
<div class="abs" style="left:0;top:797px;width:1485px;height:7px;background:#333"></div>
<div class="abs" style="left:740px;top:798px;width:6px;height:6px;border-radius:50%;background:#444"></div>
<div class="abs" style="left:0;top:804px;width:1485px;height:1px;background:#111"></div>
<div id="bytes" class="abs"><span class="abs" style="left:0;top:0;width:45px;height:19px;background:#333"></span><span class="abs" style="left:5px;color:#8a8a8a">0000</span><span class="abs" style="left:52.2px">f0 ad 4e 1d 1d 5b e0 a7  00 24 24 16 08 00 45 00   <u>··</u>N<u>··</u>[<u>··</u> <u>·</u>$$<u>···</u>E<u>·</u></span></div>
<div class="abs" style="left:0;top:823px;width:1485px;height:1.2px;background:#111"></div><div class="abs" style="left:0;top:824.2px;width:1485px;height:1px;background:#5c5c5c"></div>
<div id="status" class="abs"><span class="abs" style="left:66.5px;transform:scaleX(1.087)">Ethernet (eth), 20 bytes</span><span class="abs" style="left:990px;transform:scaleX(1.068)">Packets: 550 · Displayed: 550 (100.0%) · Dropped: 0 (0.0%)</span><span class="abs" style="left:1398.3px;transform:scaleX(1.075)">Profile: Default</span></div>
<div class="abs" style="left:971.5px;top:834.9px;width:6.4px;height:6.4px;border-radius:50%;background:#474747"></div><div class="abs" style="left:1379.8px;top:834.9px;width:6.4px;height:6.4px;border-radius:50%;background:#474747"></div>
<div class="abs" style="left:1474px;top:805px;width:11px;height:18px;background:#3a3a3a;overflow:hidden"><div class="abs" style="left:4px;top:3px;width:12px;height:30px;border-radius:4.5px;background:#9c9c9c"></div></div>
<svg class="abs" style="left:0;top:825px" width="60" height="20" viewBox="0 825 60 20">
<defs><radialGradient id="gc" cx="0.38" cy="0.32" r="0.75"><stop offset="0" stop-color="#b8eef0"/><stop offset="1" stop-color="#94dfe6"/></radialGradient></defs>
<circle cx="14.25" cy="837" r="6.5" fill="url(#gc)"/>
<rect x="33" y="830" width="10.25" height="14" fill="#f2f2ea"/><rect x="33.3" y="830.2" width="8.2" height="3.3" fill="#2f9fe2"/>
<path d="M35.6 833.5c0.4-1.4 1.2-2.3 2.4-2.6-0.4 0.9-0.4 1.8 0.1 2.6z" fill="#fff"/>
<path d="M34.6 836.4h3M34.6 838.6h2M34.6 841.6h7.4" stroke="#c4c4ba" stroke-width="0.8"/>
<path d="M45.2 830.9L37.6 838.4" stroke="#454545" stroke-width="2.4"/><path d="M38.4 837.6l-2.4 2.4" stroke="#151515" stroke-width="1.8" stroke-linecap="round"/><path d="M44.6 831.4l1-1" stroke="#6a6a6a" stroke-width="2.4"/>
</svg>
</body></html>
